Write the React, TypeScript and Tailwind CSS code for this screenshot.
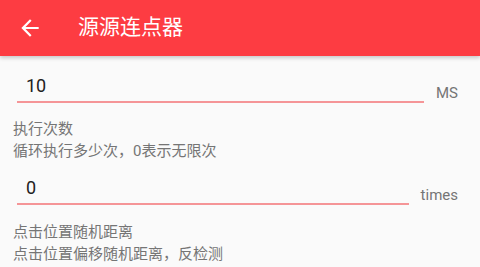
import React from 'react'

const font = { fontFamily: 'Roboto, "Noto Sans CJK SC", sans-serif' }

function ArrowBack() {
  return (
    <svg viewBox="0 0 24 24" className="w-[26px] h-[26px]" fill="white">
      <path d="M20 11H7.83l5.59-5.59L12 4l-8 8 8 8 1.41-1.41L7.83 13H20v-2z" />
    </svg>
  )
}

function NumberRow({ value, unit }: { value: string; unit: string }) {
  return (
    <div className="flex items-end pl-[17px] pr-[22px]">
      <div className="flex-1 border-b-2 border-[#f59597] pb-[3px] pl-[9px] text-[18px] leading-[24px] text-[#212121]">
        {value}
      </div>
      <div className="ml-[12px] text-[15px] leading-[20px] text-[#757575]">{unit}</div>
    </div>
  )
}

function Desc({ title, sub }: { title: string; sub: string }) {
  return (
    <div className="pl-[13px] text-[15px] leading-[22px] text-[#757575]">
      <div>{title}</div>
      <div>{sub}</div>
    </div>
  )
}

export default function App() {
  return (
    <div className="w-[480px] h-[267px] overflow-hidden bg-[#fafafa]" style={font}>
      <div className="h-14 bg-[#fd3c42] flex items-center pl-[17px] shadow-[0_2px_4px_rgba(0,0,0,0.2)] relative">
        <ArrowBack />
        <div className="ml-[35px] text-[21px] font-normal text-white">源源连点器</div>
      </div>
      <div className="mt-[18px]">
        <NumberRow value="10" unit="MS" />
      </div>
      <div className="mt-[15px]">
        <Desc title="执行次数" sub="循环执行多少次，0表示无限次" />
      </div>
      <div className="mt-[14px]">
        <NumberRow value="0" unit="times" />
      </div>
      <div className="mt-[16px]">
        <Desc title="点击位置随机距离" sub="点击位置偏移随机距离，反检测" />
      </div>
    </div>
  )
}
